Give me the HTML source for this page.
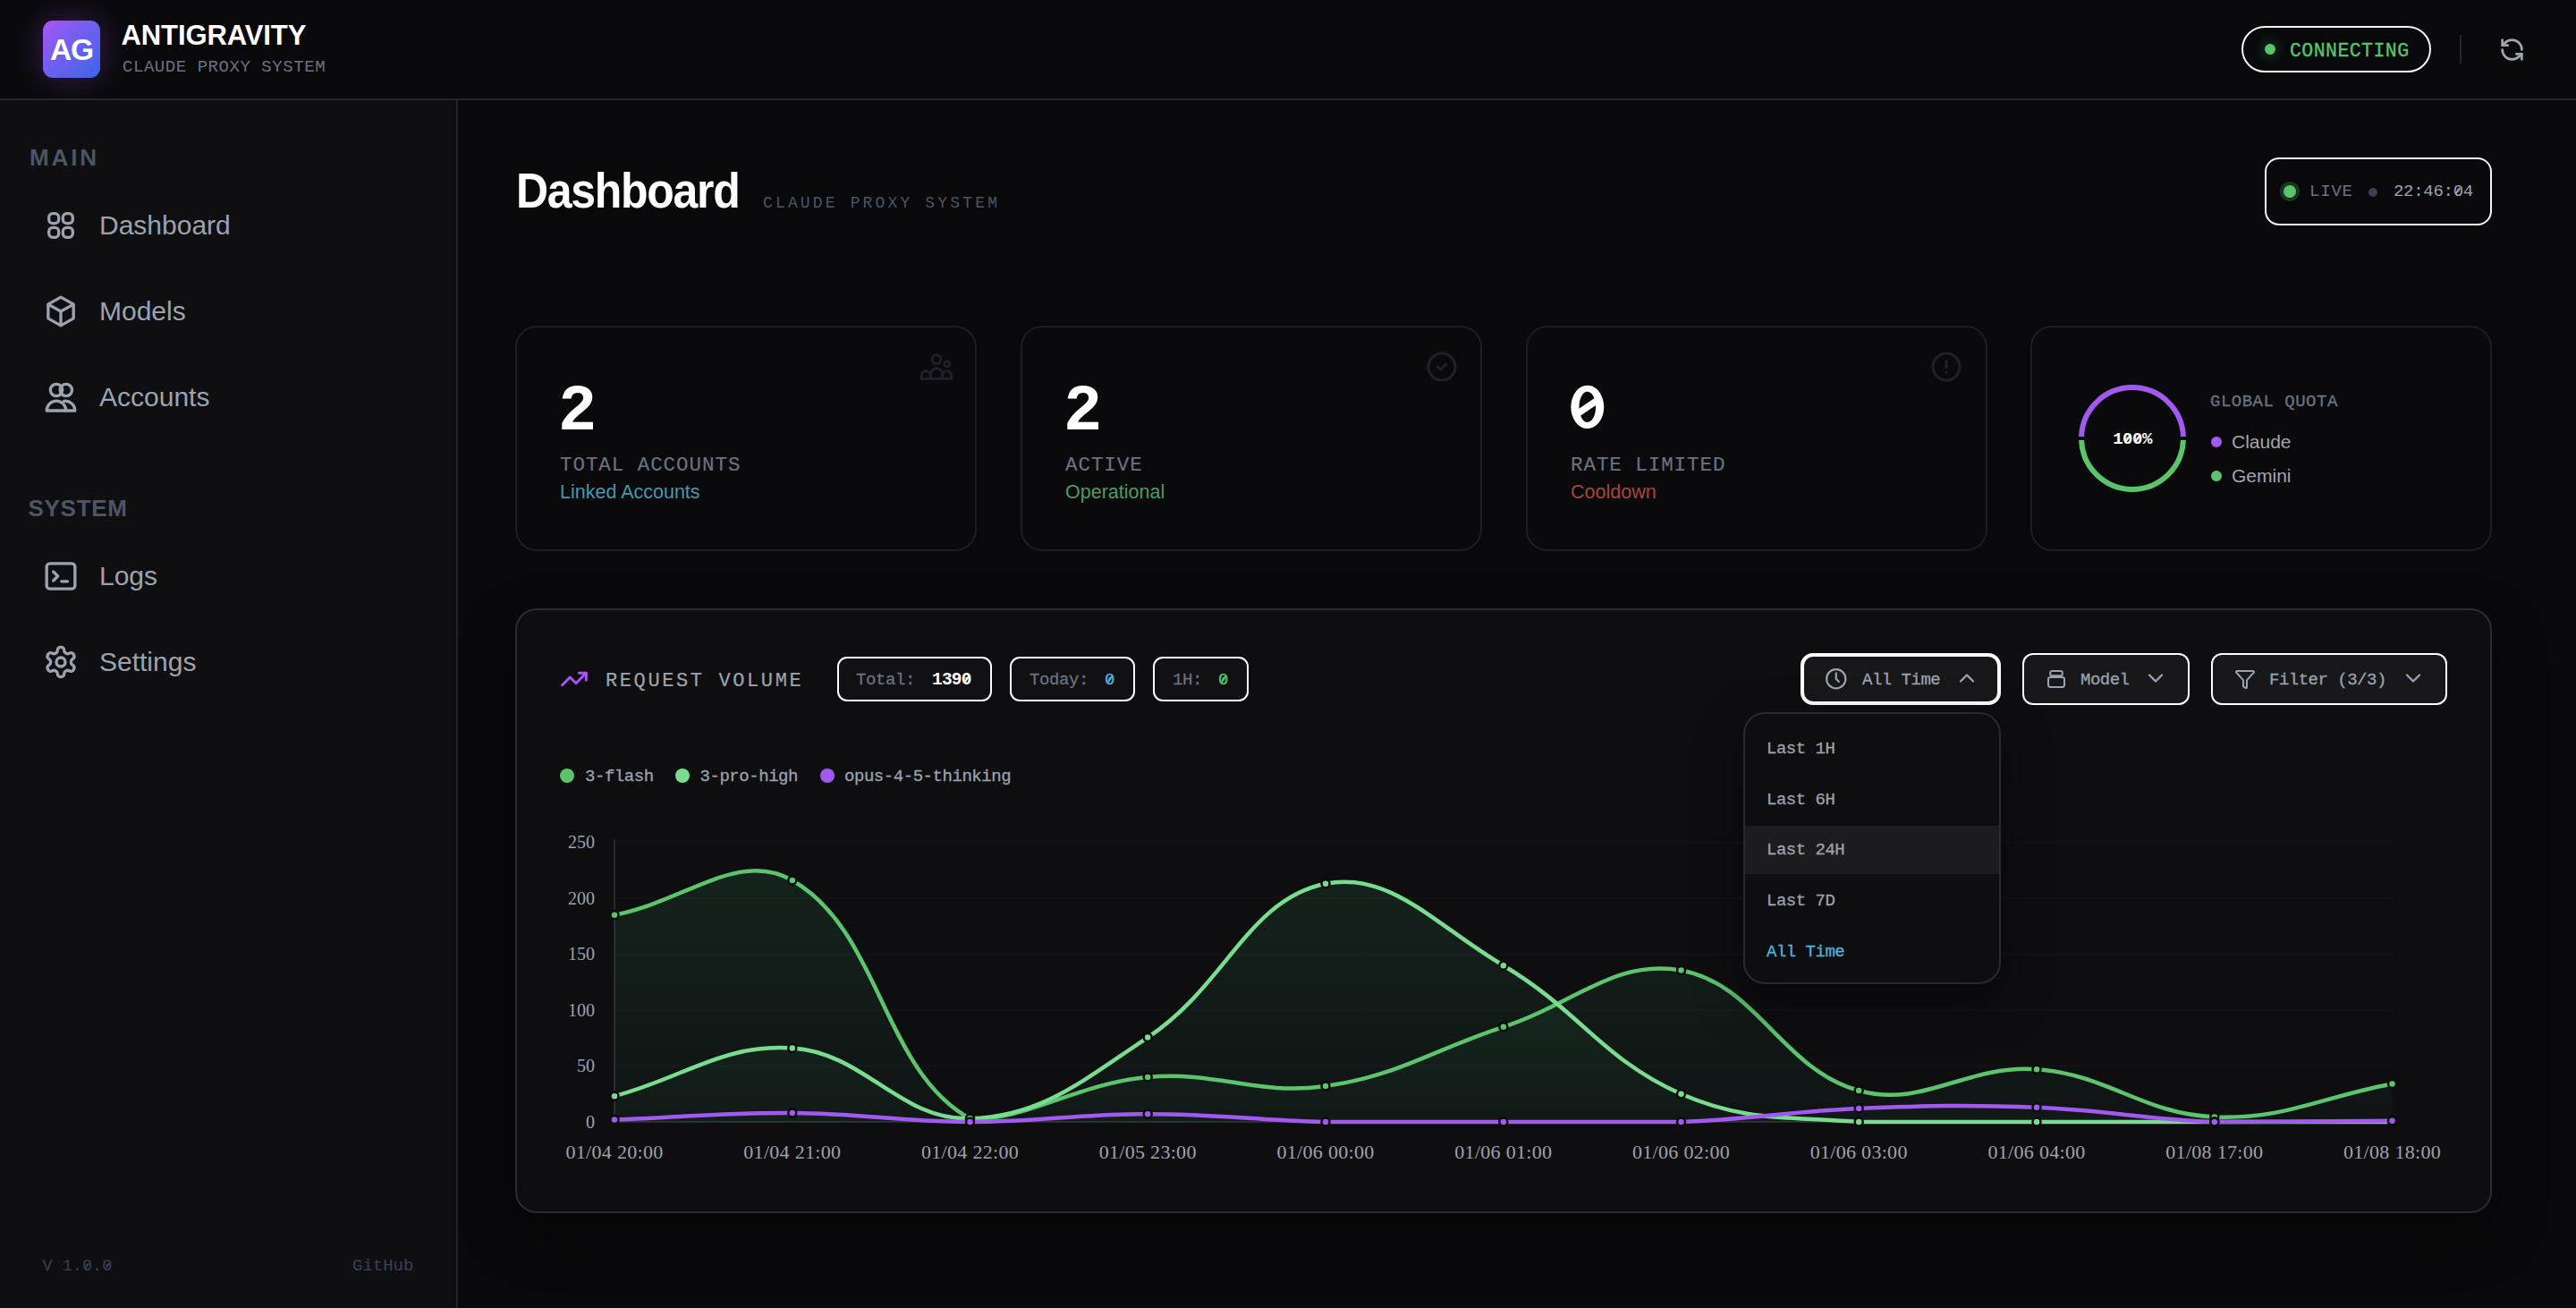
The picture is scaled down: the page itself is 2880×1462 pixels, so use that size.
<!DOCTYPE html>
<html><head><meta charset="utf-8">
<style>
*{box-sizing:border-box;margin:0;padding:0}
html,body{width:2880px;height:1462px;overflow:hidden;background:#09090b}
@media (max-width:2000px){html{zoom:0.5}}
body{position:relative;font-family:"Liberation Sans",sans-serif;color:#fff}
.mono{font-family:"Liberation Mono",monospace}
.abs{position:absolute}
.t{position:absolute;white-space:nowrap;line-height:1}
.z{position:relative;display:inline-block}.z::after{content:"";position:absolute;left:0.3em;top:0.43em;width:0.1em;height:0.4em;background:currentColor;transform:translate(-50%,-50%) rotate(34deg)}
svg.ic{position:absolute;fill:none;stroke-linecap:round;stroke-linejoin:round}
/* header */
#hdr{position:absolute;left:0;top:0;width:2880px;height:112px;background:#09090b;border-bottom:2px solid #26262a}
#logo{position:absolute;left:48px;top:23px;width:64px;height:64px;border-radius:11px;background:linear-gradient(135deg,#a855f7 0%,#6d5ff0 50%,#3b66e8 100%);box-shadow:0 0 36px rgba(168,85,247,0.32)}
#side{position:absolute;left:0;top:112px;width:512px;height:1350px;background:#0f0f12;border-right:2px solid #232327}
.card{position:absolute;top:364px;width:516px;height:252px;border:2px solid #1e1e22;border-radius:24px;background:#0a0a0d}
#panel{position:absolute;left:576px;top:680px;width:2210px;height:676px;border:2px solid #2c2c30;border-radius:24px;background:#0e0e11;box-shadow:0 24px 60px rgba(0,0,0,0.35)}
.box{position:absolute;border:2px solid #fff;border-radius:11px;background:#111114}
.btn{position:absolute;top:730px;height:58px;border:2px solid #fff;border-radius:12px;background:#18181b}
</style></head>
<body>
<!-- HEADER -->
<div id="hdr">
  <div id="logo"></div>
  <div class="t" style="left:56px;top:38.5px;font-size:33.5px;font-weight:700;letter-spacing:-1.2px">AG</div>
  <div class="t" style="left:135.5px;top:23.6px;font-size:31px;font-weight:700;letter-spacing:-0.1px">ANTIGRAVITY</div>
  <div class="t mono" style="left:137px;top:66px;font-size:19px;letter-spacing:0.55px;color:#6b7280">CLAUDE PROXY SYSTEM</div>
  <div class="abs" style="left:2506px;top:29px;width:212px;height:52px;border:2px solid #f4f4f5;border-radius:26px"></div>
  <div class="abs" style="left:2520px;top:37px;width:36px;height:36px;border-radius:50%;background:radial-gradient(circle,rgba(74,222,128,0.14) 0%,rgba(74,222,128,0) 70%)"></div>
  <div class="abs" style="left:2532px;top:49px;width:12px;height:12px;border-radius:50%;background:#5ac46b"></div>
  <div class="t mono" style="left:2560px;top:46.5px;font-size:21.5px;letter-spacing:0.45px;color:#5ac46b;-webkit-text-stroke:0.35px #5ac46b">CONNECTING</div>
  <div class="abs" style="left:2750px;top:39px;width:2px;height:32px;background:#26262a"></div>
  <svg class="ic" style="left:2793.5px;top:40.5px" width="29" height="29" viewBox="0 0 24 24" stroke="#a1a5ad" stroke-width="2.2"><path d="M21 12a9 9 0 0 0-9-9 9.75 9.75 0 0 0-6.74 2.74L3 8"/><path d="M3 3v5h5"/><path d="M3 12a9 9 0 0 0 9 9 9.75 9.75 0 0 0 6.74-2.74L21 16"/><path d="M16 16h5v5"/></svg>
</div>

<!-- SIDEBAR -->
<div id="side"></div>
<div class="t" style="left:33px;top:162.9px;font-size:26px;font-weight:700;letter-spacing:2.9px;color:#4b5563">MAIN</div>
<div class="t" style="left:31.5px;top:554.9px;font-size:26px;font-weight:700;letter-spacing:0.7px;color:#4b5563">SYSTEM</div>
<svg class="ic" style="left:48.0px;top:232.0px" width="40" height="40" viewBox="0 0 24 24" stroke="#9ca3af" stroke-width="2" ><rect x="4" y="4" width="6.6" height="6.6" rx="2.6"/><rect x="13.4" y="4" width="6.6" height="6.6" rx="2.6"/><rect x="4" y="13.4" width="6.6" height="6.6" rx="2.6"/><rect x="13.4" y="13.4" width="6.6" height="6.6" rx="2.6"/></svg>
<div class="t" style="top:236.5px;font-size:30px;font-family:'Liberation Sans',sans-serif;color:#9ca3af;left:111.0px;">Dashboard</div>
<svg class="ic" style="left:48.0px;top:328.0px" width="40" height="40" viewBox="0 0 24 24" stroke="#9ca3af" stroke-width="2" ><path d="M12 2.5 20.5 7.3v9.4L12 21.5 3.5 16.7V7.3Z"/><path d="M3.7 7.4 12 12l8.3-4.6"/><path d="M12 12v9.3"/></svg>
<div class="t" style="top:332.5px;font-size:30px;font-family:'Liberation Sans',sans-serif;color:#9ca3af;left:111.0px;">Models</div>
<svg class="ic" style="left:48.0px;top:424.0px" width="40" height="40" viewBox="0 0 24 24" stroke="#9ca3af" stroke-width="2" ><circle cx="9" cy="7.2" r="4"/><circle cx="15.5" cy="7.2" r="4"/><path d="M2.5 21a6.5 6.5 0 0 1 13 0Z"/><path d="M14.2 14.6A6.5 6.5 0 0 1 21.5 21h-6"/></svg>
<div class="t" style="top:428.5px;font-size:30px;font-family:'Liberation Sans',sans-serif;color:#9ca3af;left:111.0px;">Accounts</div>
<svg class="ic" style="left:48.0px;top:624.0px" width="40" height="40" viewBox="0 0 24 24" stroke="#9ca3af" stroke-width="2" ><rect x="2.5" y="3.5" width="19" height="17" rx="2.2"/><path d="m7 9 3 3-3 3"/><path d="M12.5 15.5h4"/></svg>
<div class="t" style="top:628.5px;font-size:30px;font-family:'Liberation Sans',sans-serif;color:#9ca3af;left:111.0px;">Logs</div>
<svg class="ic" style="left:48.0px;top:720.0px" width="40" height="40" viewBox="0 0 24 24" stroke="#9ca3af" stroke-width="2" ><path d="M12.22 2h-.44a2 2 0 0 0-2 2v.18a2 2 0 0 1-1 1.73l-.43.25a2 2 0 0 1-2 0l-.15-.08a2 2 0 0 0-2.73.73l-.22.38a2 2 0 0 0 .73 2.73l.15.1a2 2 0 0 1 1 1.72v.51a2 2 0 0 1-1 1.74l-.15.09a2 2 0 0 0-.73 2.73l.22.38a2 2 0 0 0 2.73.73l.15-.08a2 2 0 0 1 2 0l.43.25a2 2 0 0 1 1 1.73V20a2 2 0 0 0 2 2h.44a2 2 0 0 0 2-2v-.18a2 2 0 0 1 1-1.73l.43-.25a2 2 0 0 1 2 0l.15.08a2 2 0 0 0 2.73-.73l.22-.39a2 2 0 0 0-.73-2.73l-.15-.08a2 2 0 0 1-1-1.74v-.5a2 2 0 0 1 1-1.74l.15-.09a2 2 0 0 0 .73-2.73l-.22-.38a2 2 0 0 0-2.73-.73l-.15.08a2 2 0 0 1-2 0l-.43-.25a2 2 0 0 1-1-1.73V4a2 2 0 0 0-2-2z"/><circle cx="12" cy="12" r="3"/></svg>
<div class="t" style="top:724.5px;font-size:30px;font-family:'Liberation Sans',sans-serif;color:#9ca3af;left:111.0px;">Settings</div>
<div class="t mono" style="left:47.5px;top:1407px;font-size:18.5px;color:#374151">V 1.<span class="z">0</span>.<span class="z">0</span></div>
<div class="t mono" style="left:394px;top:1406px;font-size:19px;color:#374151">GitHub</div>

<!-- MAIN -->
<div class="t" style="left:577px;top:189.5px;font-size:50px;font-weight:700;letter-spacing:-1.3px;transform:scaleY(1.1);transform-origin:0 42.5px">Dashboard</div>
<div class="t mono" style="left:853px;top:218px;font-size:18px;letter-spacing:3.15px;color:#4b5563">CLAUDE PROXY SYSTEM</div>
<div class="abs" style="left:2532px;top:176px;width:254px;height:76px;border:2px solid #f4f4f5;border-radius:16px"></div>
<div class="abs" style="left:2549px;top:203px;width:22px;height:22px;border-radius:50%;background:#1b3322"></div>
<div class="abs" style="left:2553px;top:207px;width:14px;height:14px;border-radius:50%;background:#5ac46b"></div>
<div class="t mono" style="left:2582px;top:205px;font-size:19px;letter-spacing:0.8px;color:#6b7280">LIVE</div>
<div class="abs" style="left:2648px;top:210px;width:10px;height:10px;border-radius:50%;background:#374151"></div>
<div class="t mono" style="left:2676px;top:205px;font-size:19px;letter-spacing:-0.3px;color:#9ca3af">22:46:<span class="z">0</span>4</div>

<div class="card" style="left:576px"></div>
<div class="card" style="left:1141px"></div>
<div class="card" style="left:1706px"></div>
<div class="card" style="left:2270px"></div>
<div class="t" style="top:424.8px;font-size:72px;font-family:'Liberation Mono',monospace;color:#fff;font-weight:700;left:624.0px;">2</div>
<div class="t" style="top:509.2px;font-size:22.5px;font-family:'Liberation Mono',monospace;color:#6b7280;letter-spacing:0.95px;left:626.0px;-webkit-text-stroke:0.15px #6b7280;">TOTAL ACCOUNTS</div>
<div class="t" style="top:539.7px;font-size:21.5px;font-family:'Liberation Sans',sans-serif;color:#4696ad;left:626.0px;">Linked Accounts</div>
<svg class="ic" style="left:1029.0px;top:392.0px" width="36" height="36" viewBox="0 0 24 24" stroke="#1e212a" stroke-width="2" ><circle cx="12" cy="6.4" r="3.3"/><circle cx="19.85" cy="9.75" r="2"/><path d="M7.6 20.9V17.9a4.45 4.7 0 0 1 8.9 0v3"/><path d="M0.9 20.9V19a3.35 3.8 0 0 1 6.7 0"/><path d="M16.5 19a3.3 3.8 0 0 1 6.6 0v1.9"/><path d="M0.9 20.9H23.1"/></svg>
<div class="t" style="top:424.8px;font-size:72px;font-family:'Liberation Mono',monospace;color:#fff;font-weight:700;left:1189.0px;">2</div>
<div class="t" style="top:509.2px;font-size:22.5px;font-family:'Liberation Mono',monospace;color:#6b7280;letter-spacing:0.95px;left:1191.0px;-webkit-text-stroke:0.15px #6b7280;">ACTIVE</div>
<div class="t" style="top:539.7px;font-size:21.5px;font-family:'Liberation Sans',sans-serif;color:#4e9c5c;left:1191.0px;">Operational</div>
<svg class="ic" style="left:1594.0px;top:392.0px" width="36" height="36" viewBox="0 0 24 24" stroke="#1e212a" stroke-width="2" ><circle cx="12" cy="12" r="10"/><path d="m9 12 2 2 4-4"/></svg>
<svg class="abs" style="left:1750px;top:425px" width="50" height="60" viewBox="1750 425 50 60"><defs><clipPath id="zc"><ellipse cx="1774.75" cy="454.9" rx="10.5" ry="18.5"/></clipPath></defs><path fill="#fff" fill-rule="evenodd" d="M1756.3 454.9a18.45 24.2 0 1 0 36.9 0a18.45 24.2 0 1 0 -36.9 0ZM1765.45 454.9a9.3 17.1 0 1 0 18.6 0a9.3 17.1 0 1 0 -18.6 0Z"/><line x1="1755" y1="468.5" x2="1794.5" y2="441.3" stroke="#fff" stroke-width="7.4" clip-path="url(#zc)"/></svg>
<div class="t" style="top:509.2px;font-size:22.5px;font-family:'Liberation Mono',monospace;color:#6b7280;letter-spacing:0.95px;left:1756.0px;-webkit-text-stroke:0.15px #6b7280;">RATE LIMITED</div>
<div class="t" style="top:539.7px;font-size:21.5px;font-family:'Liberation Sans',sans-serif;color:#a6453b;left:1756.0px;">Cooldown</div>
<svg class="ic" style="left:2158.0px;top:392.0px" width="36" height="36" viewBox="0 0 24 24" stroke="#1e212a" stroke-width="2" ><circle cx="12" cy="12" r="10"/><line x1="12" x2="12" y1="8" y2="12"/><line x1="12" x2="12.01" y1="16" y2="16"/></svg>
<svg class="abs" style="left:2314px;top:420px" width="140" height="140" viewBox="0 0 140 140"><path d="M13.03,68.21 A57,57 0 0 1 126.97,68.21" fill="none" stroke="#a259f0" stroke-width="6"/><path d="M126.97,71.79 A57,57 0 0 1 13.03,71.79" fill="none" stroke="#5ac46b" stroke-width="6"/></svg>
<div class="t" style="top:481.6px;font-size:19px;font-family:'Liberation Mono',monospace;color:#fff;font-weight:700;letter-spacing:-0.5px;left:1884.0px;width:1000px;text-align:center;">1<span class="z">0</span><span class="z">0</span>%</div>
<div class="t" style="top:439.6px;font-size:19px;font-family:'Liberation Mono',monospace;color:#6b7280;letter-spacing:0.5px;-webkit-text-stroke:0.3px currentColor;left:2471.0px;">GLOBAL QUOTA</div>
<div class="abs" style="left:2472px;top:488px;width:12px;height:12px;border-radius:50%;background:#a259f0"></div>
<div class="abs" style="left:2472px;top:526px;width:12px;height:12px;border-radius:50%;background:#5ac46b"></div>
<div class="t" style="top:482.9px;font-size:21px;font-family:'Liberation Sans',sans-serif;color:#a1a5ad;left:2495.0px;">Claude</div>
<div class="t" style="top:521.0px;font-size:21px;font-family:'Liberation Sans',sans-serif;color:#a1a5ad;left:2495.0px;">Gemini</div>

<!-- <svg class="ic" style="left:626.0px;top:743.0px" width="32" height="32" viewBox="0 0 24 24" stroke="#a855f7" stroke-width="2.2" ><path d="M22 7 13.5 15.5 8.5 10.5 2 17"/><path d="M16 7h6v6"/></svg>
<div class="t" style="top:750.8px;font-size:22px;font-family:'Liberation Mono',monospace;color:#9ca3af;letter-spacing:2.6px;left:677.0px;-webkit-text-stroke:0.2px #9ca3af;">REQUEST VOLUME</div>
<div class="box" style="left:936px;top:734px;width:173px;height:50px"></div>
<div class="box" style="left:1129px;top:734px;width:140px;height:50px"></div>
<div class="box" style="left:1289px;top:734px;width:107px;height:50px"></div>
<div class="t" style="top:751.1px;font-size:19px;font-family:'Liberation Mono',monospace;color:#6b7280;letter-spacing:-0.4px;-webkit-text-stroke:0.3px currentColor;left:957.0px;">Total:</div>
<div class="t" style="top:751.0px;font-size:19.5px;font-family:'Liberation Mono',monospace;color:#fff;font-weight:700;letter-spacing:-0.8px;left:1042.0px;">139<span class="z">0</span></div>
<div class="t" style="top:751.1px;font-size:19px;font-family:'Liberation Mono',monospace;color:#6b7280;letter-spacing:-0.4px;-webkit-text-stroke:0.3px currentColor;left:1151.0px;">Today:</div>
<div class="t" style="top:751.1px;font-size:19px;font-family:'Liberation Mono',monospace;color:#4fb3d9;-webkit-text-stroke:0.3px currentColor;left:1235.0px;"><span class="z">0</span></div>
<div class="t" style="top:751.1px;font-size:19px;font-family:'Liberation Mono',monospace;color:#6b7280;letter-spacing:-0.4px;-webkit-text-stroke:0.3px currentColor;left:1311.0px;">1H:</div>
<div class="t" style="top:751.1px;font-size:19px;font-family:'Liberation Mono',monospace;color:#5ac46b;-webkit-text-stroke:0.3px currentColor;left:1362.0px;"><span class="z">0</span></div>
<div class="btn" style="left:2013px;width:224px;border-width:4px;border-radius:14px"></div>
<div class="btn" style="left:2261px;width:187px"></div>
<div class="btn" style="left:2472px;width:264px"></div>
<svg class="ic" style="left:2039.8px;top:746.2px" width="25.5" height="25.5" viewBox="0 0 24 24" stroke="#9ca3af" stroke-width="2.1" ><circle cx="12" cy="12" r="10"/><path d="M12 6v6l3 3"/></svg>
<div class="t" style="top:750.6px;font-size:19px;font-family:'Liberation Mono',monospace;color:#9ca3af;letter-spacing:-0.5px;-webkit-text-stroke:0.3px currentColor;left:2082.0px;">All Time</div>
<svg class="ic" style="left:2185.0px;top:744.0px" width="28" height="28" viewBox="0 0 24 24" stroke="#9ca3af" stroke-width="2" ><path d="m6 15 6-6 6 6"/></svg>
<svg class="ic" style="left:2287.0px;top:747.0px" width="24" height="24" viewBox="0 0 24 24" stroke="#9ca3af" stroke-width="2" ><rect x="5.2" y="3" width="13.6" height="5.2" rx="2"/><rect x="3" y="10" width="18" height="11" rx="2.4"/></svg>
<div class="t" style="top:750.6px;font-size:19px;font-family:'Liberation Mono',monospace;color:#9ca3af;letter-spacing:-0.5px;-webkit-text-stroke:0.3px currentColor;left:2326.0px;">Model</div>
<svg class="ic" style="left:2396.0px;top:744.0px" width="28" height="28" viewBox="0 0 24 24" stroke="#9ca3af" stroke-width="2" ><path d="m6 9 6 6 6-6"/></svg>
<svg class="ic" style="left:2498.0px;top:747.0px" width="24" height="24" viewBox="0 0 24 24" stroke="#9ca3af" stroke-width="2" ><path d="M10 20a1 1 0 0 0 .553.895l2 1A1 1 0 0 0 14 21v-7a2 2 0 0 1 .517-1.341L21.74 4.67A1 1 0 0 0 21 3H3a1 1 0 0 0-.742 1.67l7.225 7.989A2 2 0 0 1 10 14z"/></svg>
<div class="t" style="top:750.6px;font-size:19px;font-family:'Liberation Mono',monospace;color:#9ca3af;letter-spacing:-0.5px;-webkit-text-stroke:0.3px currentColor;left:2537.0px;">Filter (3/3)</div>
<svg class="ic" style="left:2684.0px;top:744.0px" width="28" height="28" viewBox="0 0 24 24" stroke="#9ca3af" stroke-width="2" ><path d="m6 9 6 6 6-6"/></svg>
<div class="abs" style="left:626px;top:859px;width:16px;height:16px;border-radius:50%;background:#5ac46b"></div>
<div class="t" style="top:858.6px;font-size:19px;font-family:'Liberation Mono',monospace;color:#9ca3af;letter-spacing:-0.45px;-webkit-text-stroke:0.3px currentColor;left:654.0px;">3-flash</div>
<div class="abs" style="left:755px;top:859px;width:16px;height:16px;border-radius:50%;background:#7adc8e"></div>
<div class="t" style="top:858.6px;font-size:19px;font-family:'Liberation Mono',monospace;color:#9ca3af;letter-spacing:-0.45px;-webkit-text-stroke:0.3px currentColor;left:782.5px;">3-pro-high</div>
<div class="abs" style="left:917px;top:859px;width:16px;height:16px;border-radius:50%;background:#a259f0"></div>
<div class="t" style="top:858.6px;font-size:19px;font-family:'Liberation Mono',monospace;color:#9ca3af;letter-spacing:-0.45px;-webkit-text-stroke:0.3px currentColor;left:944.0px;">opus-4-5-thinking</div>
<svg class="abs" style="left:0;top:0" width="2880" height="1462" viewBox="0 0 2880 1462">
<defs><linearGradient id="gf" x1="0" y1="941" x2="0" y2="1254" gradientUnits="userSpaceOnUse"><stop offset="0" stop-color="#4ade80" stop-opacity="0.11"/><stop offset="1" stop-color="#4ade80" stop-opacity="0.025"/></linearGradient></defs>
<line x1="687.0" y1="1254.0" x2="2674.5" y2="1254.0" stroke="#2a2a2e" stroke-width="2"/>
<line x1="687.0" y1="1191.5" x2="2674.5" y2="1191.5" stroke="#121215" stroke-width="2"/>
<line x1="687.0" y1="1129.0" x2="2674.5" y2="1129.0" stroke="#121215" stroke-width="2"/>
<line x1="687.0" y1="1066.5" x2="2674.5" y2="1066.5" stroke="#121215" stroke-width="2"/>
<line x1="687.0" y1="1004.0" x2="2674.5" y2="1004.0" stroke="#121215" stroke-width="2"/>
<line x1="687.0" y1="941.5" x2="2674.5" y2="941.5" stroke="#121215" stroke-width="2"/>
<line x1="687.0" y1="938.5" x2="687.0" y2="1254.0" stroke="#2a2a2e" stroke-width="2"/>
<path d="M687.0,1022.8 C766.5,1007.2 825.5,949.5 885.8,984.0 C984.5,1040.5 986.0,1195.7 1084.5,1250.2 C1145.0,1254.0 1202.8,1211.3 1283.2,1204.0 C1361.8,1196.8 1404.5,1225.0 1482.0,1214.0 C1563.5,1202.5 1601.1,1173.7 1680.8,1147.8 C1760.1,1121.9 1805.6,1071.4 1879.5,1084.6 C1964.6,1099.9 1991.6,1194.9 2078.2,1219.0 C2150.6,1239.1 2198.6,1189.5 2277.0,1195.2 C2357.6,1201.2 2395.6,1245.1 2475.8,1248.4 C2554.6,1251.6 2595.0,1226.2 2674.5,1211.5 L2674.5,1254.0 L687.0,1254.0 Z" fill="url(#gf)"/>
<path d="M687.0,1225.2 C766.5,1203.8 807.7,1166.6 885.8,1171.5 C966.7,1176.6 1005.9,1252.6 1084.5,1250.2 C1164.9,1247.8 1211.1,1207.3 1283.2,1159.6 C1370.1,1102.3 1395.2,1005.3 1482.0,987.8 C1554.2,973.1 1605.8,1034.9 1680.8,1079.2 C1764.8,1128.9 1792.2,1184.4 1879.5,1222.8 C1951.2,1254.0 1998.3,1247.7 2078.2,1254.0 C2157.3,1254.0 2197.5,1254.0 2277.0,1254.0 C2356.5,1254.0 2396.2,1254.0 2475.8,1254.0 C2555.2,1254.0 2595.0,1254.0 2674.5,1254.0 L2674.5,1254.0 L687.0,1254.0 Z" fill="url(#gf)"/>
<path d="M687.0,1251.5 C766.5,1248.5 806.3,1243.5 885.8,1244.0 C965.3,1244.5 1005.0,1253.7 1084.5,1254.0 C1164.0,1254.0 1203.8,1245.2 1283.2,1245.2 C1362.8,1245.2 1402.5,1252.2 1482.0,1254.0 C1561.5,1254.0 1601.2,1254.0 1680.8,1254.0 C1760.2,1254.0 1800.1,1254.0 1879.5,1254.0 C1959.1,1251.0 1998.6,1242.3 2078.2,1239.0 C2157.6,1235.8 2197.6,1234.8 2277.0,1237.8 C2356.6,1240.8 2396.1,1251.0 2475.8,1254.0 C2555.1,1254.0 2595.0,1253.2 2674.5,1252.8 L2674.5,1254.0 L687.0,1254.0 Z" fill="url(#gf)"/>
<path d="M687.0,1022.8 C766.5,1007.2 825.5,949.5 885.8,984.0 C984.5,1040.5 986.0,1195.7 1084.5,1250.2 C1145.0,1254.0 1202.8,1211.3 1283.2,1204.0 C1361.8,1196.8 1404.5,1225.0 1482.0,1214.0 C1563.5,1202.5 1601.1,1173.7 1680.8,1147.8 C1760.1,1121.9 1805.6,1071.4 1879.5,1084.6 C1964.6,1099.9 1991.6,1194.9 2078.2,1219.0 C2150.6,1239.1 2198.6,1189.5 2277.0,1195.2 C2357.6,1201.2 2395.6,1245.1 2475.8,1248.4 C2554.6,1251.6 2595.0,1226.2 2674.5,1211.5" fill="none" stroke="#5cc46c" stroke-width="4.5" stroke-linejoin="round" stroke-linecap="round"/>
<path d="M687.0,1225.2 C766.5,1203.8 807.7,1166.6 885.8,1171.5 C966.7,1176.6 1005.9,1252.6 1084.5,1250.2 C1164.9,1247.8 1211.1,1207.3 1283.2,1159.6 C1370.1,1102.3 1395.2,1005.3 1482.0,987.8 C1554.2,973.1 1605.8,1034.9 1680.8,1079.2 C1764.8,1128.9 1792.2,1184.4 1879.5,1222.8 C1951.2,1254.0 1998.3,1247.7 2078.2,1254.0 C2157.3,1254.0 2197.5,1254.0 2277.0,1254.0 C2356.5,1254.0 2396.2,1254.0 2475.8,1254.0 C2555.2,1254.0 2595.0,1254.0 2674.5,1254.0" fill="none" stroke="#7adc8e" stroke-width="4.5" stroke-linejoin="round" stroke-linecap="round"/>
<path d="M687.0,1251.5 C766.5,1248.5 806.3,1243.5 885.8,1244.0 C965.3,1244.5 1005.0,1253.7 1084.5,1254.0 C1164.0,1254.0 1203.8,1245.2 1283.2,1245.2 C1362.8,1245.2 1402.5,1252.2 1482.0,1254.0 C1561.5,1254.0 1601.2,1254.0 1680.8,1254.0 C1760.2,1254.0 1800.1,1254.0 1879.5,1254.0 C1959.1,1251.0 1998.6,1242.3 2078.2,1239.0 C2157.6,1235.8 2197.6,1234.8 2277.0,1237.8 C2356.6,1240.8 2396.1,1251.0 2475.8,1254.0 C2555.1,1254.0 2595.0,1253.2 2674.5,1252.8" fill="none" stroke="#a259f0" stroke-width="4.5" stroke-linejoin="round" stroke-linecap="round"/>
<circle cx="687.0" cy="1022.8" r="4.5" fill="#5cc46c" stroke="#0b0b0d" stroke-width="2.5"/>
<circle cx="885.8" cy="984.0" r="4.5" fill="#5cc46c" stroke="#0b0b0d" stroke-width="2.5"/>
<circle cx="1084.5" cy="1250.2" r="4.5" fill="#5cc46c" stroke="#0b0b0d" stroke-width="2.5"/>
<circle cx="1283.2" cy="1204.0" r="4.5" fill="#5cc46c" stroke="#0b0b0d" stroke-width="2.5"/>
<circle cx="1482.0" cy="1214.0" r="4.5" fill="#5cc46c" stroke="#0b0b0d" stroke-width="2.5"/>
<circle cx="1680.8" cy="1147.8" r="4.5" fill="#5cc46c" stroke="#0b0b0d" stroke-width="2.5"/>
<circle cx="1879.5" cy="1084.6" r="4.5" fill="#5cc46c" stroke="#0b0b0d" stroke-width="2.5"/>
<circle cx="2078.2" cy="1219.0" r="4.5" fill="#5cc46c" stroke="#0b0b0d" stroke-width="2.5"/>
<circle cx="2277.0" cy="1195.2" r="4.5" fill="#5cc46c" stroke="#0b0b0d" stroke-width="2.5"/>
<circle cx="2475.8" cy="1248.4" r="4.5" fill="#5cc46c" stroke="#0b0b0d" stroke-width="2.5"/>
<circle cx="2674.5" cy="1211.5" r="4.5" fill="#5cc46c" stroke="#0b0b0d" stroke-width="2.5"/>
<circle cx="687.0" cy="1225.2" r="4.5" fill="#7adc8e" stroke="#0b0b0d" stroke-width="2.5"/>
<circle cx="885.8" cy="1171.5" r="4.5" fill="#7adc8e" stroke="#0b0b0d" stroke-width="2.5"/>
<circle cx="1084.5" cy="1250.2" r="4.5" fill="#7adc8e" stroke="#0b0b0d" stroke-width="2.5"/>
<circle cx="1283.2" cy="1159.6" r="4.5" fill="#7adc8e" stroke="#0b0b0d" stroke-width="2.5"/>
<circle cx="1482.0" cy="987.8" r="4.5" fill="#7adc8e" stroke="#0b0b0d" stroke-width="2.5"/>
<circle cx="1680.8" cy="1079.2" r="4.5" fill="#7adc8e" stroke="#0b0b0d" stroke-width="2.5"/>
<circle cx="1879.5" cy="1222.8" r="4.5" fill="#7adc8e" stroke="#0b0b0d" stroke-width="2.5"/>
<circle cx="2078.2" cy="1254.0" r="4.5" fill="#7adc8e" stroke="#0b0b0d" stroke-width="2.5"/>
<circle cx="2277.0" cy="1254.0" r="4.5" fill="#7adc8e" stroke="#0b0b0d" stroke-width="2.5"/>
<circle cx="2475.8" cy="1254.0" r="4.5" fill="#7adc8e" stroke="#0b0b0d" stroke-width="2.5"/>
<circle cx="2674.5" cy="1254.0" r="4.5" fill="#7adc8e" stroke="#0b0b0d" stroke-width="2.5"/>
<circle cx="687.0" cy="1251.5" r="4.5" fill="#a259f0" stroke="#0b0b0d" stroke-width="2.5"/>
<circle cx="885.8" cy="1244.0" r="4.5" fill="#a259f0" stroke="#0b0b0d" stroke-width="2.5"/>
<circle cx="1084.5" cy="1254.0" r="4.5" fill="#a259f0" stroke="#0b0b0d" stroke-width="2.5"/>
<circle cx="1283.2" cy="1245.2" r="4.5" fill="#a259f0" stroke="#0b0b0d" stroke-width="2.5"/>
<circle cx="1482.0" cy="1254.0" r="4.5" fill="#a259f0" stroke="#0b0b0d" stroke-width="2.5"/>
<circle cx="1680.8" cy="1254.0" r="4.5" fill="#a259f0" stroke="#0b0b0d" stroke-width="2.5"/>
<circle cx="1879.5" cy="1254.0" r="4.5" fill="#a259f0" stroke="#0b0b0d" stroke-width="2.5"/>
<circle cx="2078.2" cy="1239.0" r="4.5" fill="#a259f0" stroke="#0b0b0d" stroke-width="2.5"/>
<circle cx="2277.0" cy="1237.8" r="4.5" fill="#a259f0" stroke="#0b0b0d" stroke-width="2.5"/>
<circle cx="2475.8" cy="1254.0" r="4.5" fill="#a259f0" stroke="#0b0b0d" stroke-width="2.5"/>
<circle cx="2674.5" cy="1252.8" r="4.5" fill="#a259f0" stroke="#0b0b0d" stroke-width="2.5"/>
</svg>
<div class="t" style="top:1243.5px;font-size:20px;font-family:'Liberation Serif',serif;color:#a1a1aa;right:2215.0px;">0</div>
<div class="t" style="top:1181.0px;font-size:20px;font-family:'Liberation Serif',serif;color:#a1a1aa;right:2215.0px;">50</div>
<div class="t" style="top:1118.5px;font-size:20px;font-family:'Liberation Serif',serif;color:#a1a1aa;right:2215.0px;">100</div>
<div class="t" style="top:1056.0px;font-size:20px;font-family:'Liberation Serif',serif;color:#a1a1aa;right:2215.0px;">150</div>
<div class="t" style="top:993.5px;font-size:20px;font-family:'Liberation Serif',serif;color:#a1a1aa;right:2215.0px;">200</div>
<div class="t" style="top:931.0px;font-size:20px;font-family:'Liberation Serif',serif;color:#a1a1aa;right:2215.0px;">250</div>
<div class="t" style="top:1277.3px;font-size:22px;font-family:'Liberation Serif',serif;color:#a1a1aa;letter-spacing:0.3px;left:187.0px;width:1000px;text-align:center;">01/04 20:00</div>
<div class="t" style="top:1277.3px;font-size:22px;font-family:'Liberation Serif',serif;color:#a1a1aa;letter-spacing:0.3px;left:385.8px;width:1000px;text-align:center;">01/04 21:00</div>
<div class="t" style="top:1277.3px;font-size:22px;font-family:'Liberation Serif',serif;color:#a1a1aa;letter-spacing:0.3px;left:584.5px;width:1000px;text-align:center;">01/04 22:00</div>
<div class="t" style="top:1277.3px;font-size:22px;font-family:'Liberation Serif',serif;color:#a1a1aa;letter-spacing:0.3px;left:783.2px;width:1000px;text-align:center;">01/05 23:00</div>
<div class="t" style="top:1277.3px;font-size:22px;font-family:'Liberation Serif',serif;color:#a1a1aa;letter-spacing:0.3px;left:982.0px;width:1000px;text-align:center;">01/06 00:00</div>
<div class="t" style="top:1277.3px;font-size:22px;font-family:'Liberation Serif',serif;color:#a1a1aa;letter-spacing:0.3px;left:1180.8px;width:1000px;text-align:center;">01/06 01:00</div>
<div class="t" style="top:1277.3px;font-size:22px;font-family:'Liberation Serif',serif;color:#a1a1aa;letter-spacing:0.3px;left:1379.5px;width:1000px;text-align:center;">01/06 02:00</div>
<div class="t" style="top:1277.3px;font-size:22px;font-family:'Liberation Serif',serif;color:#a1a1aa;letter-spacing:0.3px;left:1578.2px;width:1000px;text-align:center;">01/06 03:00</div>
<div class="t" style="top:1277.3px;font-size:22px;font-family:'Liberation Serif',serif;color:#a1a1aa;letter-spacing:0.3px;left:1777.0px;width:1000px;text-align:center;">01/06 04:00</div>
<div class="t" style="top:1277.3px;font-size:22px;font-family:'Liberation Serif',serif;color:#a1a1aa;letter-spacing:0.3px;left:1975.8px;width:1000px;text-align:center;">01/08 17:00</div>
<div class="t" style="top:1277.3px;font-size:22px;font-family:'Liberation Serif',serif;color:#a1a1aa;letter-spacing:0.3px;left:2174.5px;width:1000px;text-align:center;">01/08 18:00</div>
<div class="abs" style="left:1949px;top:796px;width:288px;height:304px;border:2px solid #2a2a2e;border-radius:24px;background:#0e0e11;box-shadow:0 20px 50px rgba(0,0,0,0.5);overflow:hidden"><div class="abs" style="left:0;top:125px;width:284px;height:54px;background:#1c1c1f"></div></div>
<div class="t" style="top:827.6px;font-size:19px;font-family:'Liberation Mono',monospace;color:#a1a1aa;letter-spacing:-0.5px;-webkit-text-stroke:0.3px currentColor;left:1975.0px;">Last 1H</div>
<div class="t" style="top:884.5px;font-size:19px;font-family:'Liberation Mono',monospace;color:#a1a1aa;letter-spacing:-0.5px;-webkit-text-stroke:0.3px currentColor;left:1975.0px;">Last 6H</div>
<div class="t" style="top:941.4px;font-size:19px;font-family:'Liberation Mono',monospace;color:#a1a1aa;letter-spacing:-0.5px;-webkit-text-stroke:0.3px currentColor;left:1975.0px;">Last 24H</div>
<div class="t" style="top:998.3px;font-size:19px;font-family:'Liberation Mono',monospace;color:#a1a1aa;letter-spacing:-0.5px;-webkit-text-stroke:0.3px currentColor;left:1975.0px;">Last 7D</div>
<div class="t" style="top:1055.2px;font-size:19px;font-family:'Liberation Mono',monospace;color:#4fb3d9;letter-spacing:-0.5px;-webkit-text-stroke:0.3px currentColor;left:1975.0px;">All Time</div> -->
<div id="panel"></div>
<svg class="ic" style="left:626.0px;top:743.0px" width="32" height="32" viewBox="0 0 24 24" stroke="#a855f7" stroke-width="2.2" ><path d="M22 7 13.5 15.5 8.5 10.5 2 17"/><path d="M16 7h6v6"/></svg>
<div class="t" style="top:750.8px;font-size:22px;font-family:'Liberation Mono',monospace;color:#9ca3af;letter-spacing:2.6px;left:677.0px;-webkit-text-stroke:0.2px #9ca3af;">REQUEST VOLUME</div>
<div class="box" style="left:936px;top:734px;width:173px;height:50px"></div>
<div class="box" style="left:1129px;top:734px;width:140px;height:50px"></div>
<div class="box" style="left:1289px;top:734px;width:107px;height:50px"></div>
<div class="t" style="top:751.1px;font-size:19px;font-family:'Liberation Mono',monospace;color:#6b7280;letter-spacing:-0.4px;-webkit-text-stroke:0.3px currentColor;left:957.0px;">Total:</div>
<div class="t" style="top:751.0px;font-size:19.5px;font-family:'Liberation Mono',monospace;color:#fff;font-weight:700;letter-spacing:-0.8px;left:1042.0px;">139<span class="z">0</span></div>
<div class="t" style="top:751.1px;font-size:19px;font-family:'Liberation Mono',monospace;color:#6b7280;letter-spacing:-0.4px;-webkit-text-stroke:0.3px currentColor;left:1151.0px;">Today:</div>
<div class="t" style="top:751.1px;font-size:19px;font-family:'Liberation Mono',monospace;color:#4fb3d9;-webkit-text-stroke:0.3px currentColor;left:1235.0px;"><span class="z">0</span></div>
<div class="t" style="top:751.1px;font-size:19px;font-family:'Liberation Mono',monospace;color:#6b7280;letter-spacing:-0.4px;-webkit-text-stroke:0.3px currentColor;left:1311.0px;">1H:</div>
<div class="t" style="top:751.1px;font-size:19px;font-family:'Liberation Mono',monospace;color:#5ac46b;-webkit-text-stroke:0.3px currentColor;left:1362.0px;"><span class="z">0</span></div>
<div class="btn" style="left:2013px;width:224px;border-width:4px;border-radius:14px"></div>
<div class="btn" style="left:2261px;width:187px"></div>
<div class="btn" style="left:2472px;width:264px"></div>
<svg class="ic" style="left:2039.8px;top:746.2px" width="25.5" height="25.5" viewBox="0 0 24 24" stroke="#9ca3af" stroke-width="2.1" ><circle cx="12" cy="12" r="10"/><path d="M12 6v6l3 3"/></svg>
<div class="t" style="top:750.6px;font-size:19px;font-family:'Liberation Mono',monospace;color:#9ca3af;letter-spacing:-0.5px;-webkit-text-stroke:0.3px currentColor;left:2082.0px;">All Time</div>
<svg class="ic" style="left:2185.0px;top:744.0px" width="28" height="28" viewBox="0 0 24 24" stroke="#9ca3af" stroke-width="2" ><path d="m6 15 6-6 6 6"/></svg>
<svg class="ic" style="left:2287.0px;top:747.0px" width="24" height="24" viewBox="0 0 24 24" stroke="#9ca3af" stroke-width="2" ><rect x="5.2" y="3" width="13.6" height="5.2" rx="2"/><rect x="3" y="10" width="18" height="11" rx="2.4"/></svg>
<div class="t" style="top:750.6px;font-size:19px;font-family:'Liberation Mono',monospace;color:#9ca3af;letter-spacing:-0.5px;-webkit-text-stroke:0.3px currentColor;left:2326.0px;">Model</div>
<svg class="ic" style="left:2396.0px;top:744.0px" width="28" height="28" viewBox="0 0 24 24" stroke="#9ca3af" stroke-width="2" ><path d="m6 9 6 6 6-6"/></svg>
<svg class="ic" style="left:2498.0px;top:747.0px" width="24" height="24" viewBox="0 0 24 24" stroke="#9ca3af" stroke-width="2" ><path d="M10 20a1 1 0 0 0 .553.895l2 1A1 1 0 0 0 14 21v-7a2 2 0 0 1 .517-1.341L21.74 4.67A1 1 0 0 0 21 3H3a1 1 0 0 0-.742 1.67l7.225 7.989A2 2 0 0 1 10 14z"/></svg>
<div class="t" style="top:750.6px;font-size:19px;font-family:'Liberation Mono',monospace;color:#9ca3af;letter-spacing:-0.5px;-webkit-text-stroke:0.3px currentColor;left:2537.0px;">Filter (3/3)</div>
<svg class="ic" style="left:2684.0px;top:744.0px" width="28" height="28" viewBox="0 0 24 24" stroke="#9ca3af" stroke-width="2" ><path d="m6 9 6 6 6-6"/></svg>
<div class="abs" style="left:626px;top:859px;width:16px;height:16px;border-radius:50%;background:#5ac46b"></div>
<div class="t" style="top:858.6px;font-size:19px;font-family:'Liberation Mono',monospace;color:#9ca3af;letter-spacing:-0.45px;-webkit-text-stroke:0.3px currentColor;left:654.0px;">3-flash</div>
<div class="abs" style="left:755px;top:859px;width:16px;height:16px;border-radius:50%;background:#7adc8e"></div>
<div class="t" style="top:858.6px;font-size:19px;font-family:'Liberation Mono',monospace;color:#9ca3af;letter-spacing:-0.45px;-webkit-text-stroke:0.3px currentColor;left:782.5px;">3-pro-high</div>
<div class="abs" style="left:917px;top:859px;width:16px;height:16px;border-radius:50%;background:#a259f0"></div>
<div class="t" style="top:858.6px;font-size:19px;font-family:'Liberation Mono',monospace;color:#9ca3af;letter-spacing:-0.45px;-webkit-text-stroke:0.3px currentColor;left:944.0px;">opus-4-5-thinking</div>
<svg class="abs" style="left:0;top:0" width="2880" height="1462" viewBox="0 0 2880 1462">
<defs><linearGradient id="gf" x1="0" y1="941" x2="0" y2="1254" gradientUnits="userSpaceOnUse"><stop offset="0" stop-color="#4ade80" stop-opacity="0.11"/><stop offset="1" stop-color="#4ade80" stop-opacity="0.025"/></linearGradient></defs>
<line x1="687.0" y1="1254.0" x2="2674.5" y2="1254.0" stroke="#2a2a2e" stroke-width="2"/>
<line x1="687.0" y1="1191.5" x2="2674.5" y2="1191.5" stroke="#121215" stroke-width="2"/>
<line x1="687.0" y1="1129.0" x2="2674.5" y2="1129.0" stroke="#121215" stroke-width="2"/>
<line x1="687.0" y1="1066.5" x2="2674.5" y2="1066.5" stroke="#121215" stroke-width="2"/>
<line x1="687.0" y1="1004.0" x2="2674.5" y2="1004.0" stroke="#121215" stroke-width="2"/>
<line x1="687.0" y1="941.5" x2="2674.5" y2="941.5" stroke="#121215" stroke-width="2"/>
<line x1="687.0" y1="938.5" x2="687.0" y2="1254.0" stroke="#2a2a2e" stroke-width="2"/>
<path d="M687.0,1022.8 C766.5,1007.2 825.5,949.5 885.8,984.0 C984.5,1040.5 986.0,1195.7 1084.5,1250.2 C1145.0,1254.0 1202.8,1211.3 1283.2,1204.0 C1361.8,1196.8 1404.5,1225.0 1482.0,1214.0 C1563.5,1202.5 1601.1,1173.7 1680.8,1147.8 C1760.1,1121.9 1805.6,1071.4 1879.5,1084.6 C1964.6,1099.9 1991.6,1194.9 2078.2,1219.0 C2150.6,1239.1 2198.6,1189.5 2277.0,1195.2 C2357.6,1201.2 2395.6,1245.1 2475.8,1248.4 C2554.6,1251.6 2595.0,1226.2 2674.5,1211.5 L2674.5,1254.0 L687.0,1254.0 Z" fill="url(#gf)"/>
<path d="M687.0,1225.2 C766.5,1203.8 807.7,1166.6 885.8,1171.5 C966.7,1176.6 1005.9,1252.6 1084.5,1250.2 C1164.9,1247.8 1211.1,1207.3 1283.2,1159.6 C1370.1,1102.3 1395.2,1005.3 1482.0,987.8 C1554.2,973.1 1605.8,1034.9 1680.8,1079.2 C1764.8,1128.9 1792.2,1184.4 1879.5,1222.8 C1951.2,1254.0 1998.3,1247.7 2078.2,1254.0 C2157.3,1254.0 2197.5,1254.0 2277.0,1254.0 C2356.5,1254.0 2396.2,1254.0 2475.8,1254.0 C2555.2,1254.0 2595.0,1254.0 2674.5,1254.0 L2674.5,1254.0 L687.0,1254.0 Z" fill="url(#gf)"/>
<path d="M687.0,1251.5 C766.5,1248.5 806.3,1243.5 885.8,1244.0 C965.3,1244.5 1005.0,1253.7 1084.5,1254.0 C1164.0,1254.0 1203.8,1245.2 1283.2,1245.2 C1362.8,1245.2 1402.5,1252.2 1482.0,1254.0 C1561.5,1254.0 1601.2,1254.0 1680.8,1254.0 C1760.2,1254.0 1800.1,1254.0 1879.5,1254.0 C1959.1,1251.0 1998.6,1242.3 2078.2,1239.0 C2157.6,1235.8 2197.6,1234.8 2277.0,1237.8 C2356.6,1240.8 2396.1,1251.0 2475.8,1254.0 C2555.1,1254.0 2595.0,1253.2 2674.5,1252.8 L2674.5,1254.0 L687.0,1254.0 Z" fill="url(#gf)"/>
<path d="M687.0,1022.8 C766.5,1007.2 825.5,949.5 885.8,984.0 C984.5,1040.5 986.0,1195.7 1084.5,1250.2 C1145.0,1254.0 1202.8,1211.3 1283.2,1204.0 C1361.8,1196.8 1404.5,1225.0 1482.0,1214.0 C1563.5,1202.5 1601.1,1173.7 1680.8,1147.8 C1760.1,1121.9 1805.6,1071.4 1879.5,1084.6 C1964.6,1099.9 1991.6,1194.9 2078.2,1219.0 C2150.6,1239.1 2198.6,1189.5 2277.0,1195.2 C2357.6,1201.2 2395.6,1245.1 2475.8,1248.4 C2554.6,1251.6 2595.0,1226.2 2674.5,1211.5" fill="none" stroke="#5cc46c" stroke-width="4.5" stroke-linejoin="round" stroke-linecap="round"/>
<path d="M687.0,1225.2 C766.5,1203.8 807.7,1166.6 885.8,1171.5 C966.7,1176.6 1005.9,1252.6 1084.5,1250.2 C1164.9,1247.8 1211.1,1207.3 1283.2,1159.6 C1370.1,1102.3 1395.2,1005.3 1482.0,987.8 C1554.2,973.1 1605.8,1034.9 1680.8,1079.2 C1764.8,1128.9 1792.2,1184.4 1879.5,1222.8 C1951.2,1254.0 1998.3,1247.7 2078.2,1254.0 C2157.3,1254.0 2197.5,1254.0 2277.0,1254.0 C2356.5,1254.0 2396.2,1254.0 2475.8,1254.0 C2555.2,1254.0 2595.0,1254.0 2674.5,1254.0" fill="none" stroke="#7adc8e" stroke-width="4.5" stroke-linejoin="round" stroke-linecap="round"/>
<path d="M687.0,1251.5 C766.5,1248.5 806.3,1243.5 885.8,1244.0 C965.3,1244.5 1005.0,1253.7 1084.5,1254.0 C1164.0,1254.0 1203.8,1245.2 1283.2,1245.2 C1362.8,1245.2 1402.5,1252.2 1482.0,1254.0 C1561.5,1254.0 1601.2,1254.0 1680.8,1254.0 C1760.2,1254.0 1800.1,1254.0 1879.5,1254.0 C1959.1,1251.0 1998.6,1242.3 2078.2,1239.0 C2157.6,1235.8 2197.6,1234.8 2277.0,1237.8 C2356.6,1240.8 2396.1,1251.0 2475.8,1254.0 C2555.1,1254.0 2595.0,1253.2 2674.5,1252.8" fill="none" stroke="#a259f0" stroke-width="4.5" stroke-linejoin="round" stroke-linecap="round"/>
<circle cx="687.0" cy="1022.8" r="4.5" fill="#5cc46c" stroke="#0b0b0d" stroke-width="2.5"/>
<circle cx="885.8" cy="984.0" r="4.5" fill="#5cc46c" stroke="#0b0b0d" stroke-width="2.5"/>
<circle cx="1084.5" cy="1250.2" r="4.5" fill="#5cc46c" stroke="#0b0b0d" stroke-width="2.5"/>
<circle cx="1283.2" cy="1204.0" r="4.5" fill="#5cc46c" stroke="#0b0b0d" stroke-width="2.5"/>
<circle cx="1482.0" cy="1214.0" r="4.5" fill="#5cc46c" stroke="#0b0b0d" stroke-width="2.5"/>
<circle cx="1680.8" cy="1147.8" r="4.5" fill="#5cc46c" stroke="#0b0b0d" stroke-width="2.5"/>
<circle cx="1879.5" cy="1084.6" r="4.5" fill="#5cc46c" stroke="#0b0b0d" stroke-width="2.5"/>
<circle cx="2078.2" cy="1219.0" r="4.5" fill="#5cc46c" stroke="#0b0b0d" stroke-width="2.5"/>
<circle cx="2277.0" cy="1195.2" r="4.5" fill="#5cc46c" stroke="#0b0b0d" stroke-width="2.5"/>
<circle cx="2475.8" cy="1248.4" r="4.5" fill="#5cc46c" stroke="#0b0b0d" stroke-width="2.5"/>
<circle cx="2674.5" cy="1211.5" r="4.5" fill="#5cc46c" stroke="#0b0b0d" stroke-width="2.5"/>
<circle cx="687.0" cy="1225.2" r="4.5" fill="#7adc8e" stroke="#0b0b0d" stroke-width="2.5"/>
<circle cx="885.8" cy="1171.5" r="4.5" fill="#7adc8e" stroke="#0b0b0d" stroke-width="2.5"/>
<circle cx="1084.5" cy="1250.2" r="4.5" fill="#7adc8e" stroke="#0b0b0d" stroke-width="2.5"/>
<circle cx="1283.2" cy="1159.6" r="4.5" fill="#7adc8e" stroke="#0b0b0d" stroke-width="2.5"/>
<circle cx="1482.0" cy="987.8" r="4.5" fill="#7adc8e" stroke="#0b0b0d" stroke-width="2.5"/>
<circle cx="1680.8" cy="1079.2" r="4.5" fill="#7adc8e" stroke="#0b0b0d" stroke-width="2.5"/>
<circle cx="1879.5" cy="1222.8" r="4.5" fill="#7adc8e" stroke="#0b0b0d" stroke-width="2.5"/>
<circle cx="2078.2" cy="1254.0" r="4.5" fill="#7adc8e" stroke="#0b0b0d" stroke-width="2.5"/>
<circle cx="2277.0" cy="1254.0" r="4.5" fill="#7adc8e" stroke="#0b0b0d" stroke-width="2.5"/>
<circle cx="2475.8" cy="1254.0" r="4.5" fill="#7adc8e" stroke="#0b0b0d" stroke-width="2.5"/>
<circle cx="2674.5" cy="1254.0" r="4.5" fill="#7adc8e" stroke="#0b0b0d" stroke-width="2.5"/>
<circle cx="687.0" cy="1251.5" r="4.5" fill="#a259f0" stroke="#0b0b0d" stroke-width="2.5"/>
<circle cx="885.8" cy="1244.0" r="4.5" fill="#a259f0" stroke="#0b0b0d" stroke-width="2.5"/>
<circle cx="1084.5" cy="1254.0" r="4.5" fill="#a259f0" stroke="#0b0b0d" stroke-width="2.5"/>
<circle cx="1283.2" cy="1245.2" r="4.5" fill="#a259f0" stroke="#0b0b0d" stroke-width="2.5"/>
<circle cx="1482.0" cy="1254.0" r="4.5" fill="#a259f0" stroke="#0b0b0d" stroke-width="2.5"/>
<circle cx="1680.8" cy="1254.0" r="4.5" fill="#a259f0" stroke="#0b0b0d" stroke-width="2.5"/>
<circle cx="1879.5" cy="1254.0" r="4.5" fill="#a259f0" stroke="#0b0b0d" stroke-width="2.5"/>
<circle cx="2078.2" cy="1239.0" r="4.5" fill="#a259f0" stroke="#0b0b0d" stroke-width="2.5"/>
<circle cx="2277.0" cy="1237.8" r="4.5" fill="#a259f0" stroke="#0b0b0d" stroke-width="2.5"/>
<circle cx="2475.8" cy="1254.0" r="4.5" fill="#a259f0" stroke="#0b0b0d" stroke-width="2.5"/>
<circle cx="2674.5" cy="1252.8" r="4.5" fill="#a259f0" stroke="#0b0b0d" stroke-width="2.5"/>
</svg>
<div class="t" style="top:1243.5px;font-size:20px;font-family:'Liberation Serif',serif;color:#a1a1aa;right:2215.0px;">0</div>
<div class="t" style="top:1181.0px;font-size:20px;font-family:'Liberation Serif',serif;color:#a1a1aa;right:2215.0px;">50</div>
<div class="t" style="top:1118.5px;font-size:20px;font-family:'Liberation Serif',serif;color:#a1a1aa;right:2215.0px;">100</div>
<div class="t" style="top:1056.0px;font-size:20px;font-family:'Liberation Serif',serif;color:#a1a1aa;right:2215.0px;">150</div>
<div class="t" style="top:993.5px;font-size:20px;font-family:'Liberation Serif',serif;color:#a1a1aa;right:2215.0px;">200</div>
<div class="t" style="top:931.0px;font-size:20px;font-family:'Liberation Serif',serif;color:#a1a1aa;right:2215.0px;">250</div>
<div class="t" style="top:1277.3px;font-size:22px;font-family:'Liberation Serif',serif;color:#a1a1aa;letter-spacing:0.3px;left:187.0px;width:1000px;text-align:center;">01/04 20:00</div>
<div class="t" style="top:1277.3px;font-size:22px;font-family:'Liberation Serif',serif;color:#a1a1aa;letter-spacing:0.3px;left:385.8px;width:1000px;text-align:center;">01/04 21:00</div>
<div class="t" style="top:1277.3px;font-size:22px;font-family:'Liberation Serif',serif;color:#a1a1aa;letter-spacing:0.3px;left:584.5px;width:1000px;text-align:center;">01/04 22:00</div>
<div class="t" style="top:1277.3px;font-size:22px;font-family:'Liberation Serif',serif;color:#a1a1aa;letter-spacing:0.3px;left:783.2px;width:1000px;text-align:center;">01/05 23:00</div>
<div class="t" style="top:1277.3px;font-size:22px;font-family:'Liberation Serif',serif;color:#a1a1aa;letter-spacing:0.3px;left:982.0px;width:1000px;text-align:center;">01/06 00:00</div>
<div class="t" style="top:1277.3px;font-size:22px;font-family:'Liberation Serif',serif;color:#a1a1aa;letter-spacing:0.3px;left:1180.8px;width:1000px;text-align:center;">01/06 01:00</div>
<div class="t" style="top:1277.3px;font-size:22px;font-family:'Liberation Serif',serif;color:#a1a1aa;letter-spacing:0.3px;left:1379.5px;width:1000px;text-align:center;">01/06 02:00</div>
<div class="t" style="top:1277.3px;font-size:22px;font-family:'Liberation Serif',serif;color:#a1a1aa;letter-spacing:0.3px;left:1578.2px;width:1000px;text-align:center;">01/06 03:00</div>
<div class="t" style="top:1277.3px;font-size:22px;font-family:'Liberation Serif',serif;color:#a1a1aa;letter-spacing:0.3px;left:1777.0px;width:1000px;text-align:center;">01/06 04:00</div>
<div class="t" style="top:1277.3px;font-size:22px;font-family:'Liberation Serif',serif;color:#a1a1aa;letter-spacing:0.3px;left:1975.8px;width:1000px;text-align:center;">01/08 17:00</div>
<div class="t" style="top:1277.3px;font-size:22px;font-family:'Liberation Serif',serif;color:#a1a1aa;letter-spacing:0.3px;left:2174.5px;width:1000px;text-align:center;">01/08 18:00</div>
<div class="abs" style="left:1949px;top:796px;width:288px;height:304px;border:2px solid #2a2a2e;border-radius:24px;background:#0e0e11;box-shadow:0 20px 50px rgba(0,0,0,0.5);overflow:hidden"><div class="abs" style="left:0;top:125px;width:284px;height:54px;background:#1c1c1f"></div></div>
<div class="t" style="top:827.6px;font-size:19px;font-family:'Liberation Mono',monospace;color:#a1a1aa;letter-spacing:-0.5px;-webkit-text-stroke:0.3px currentColor;left:1975.0px;">Last 1H</div>
<div class="t" style="top:884.5px;font-size:19px;font-family:'Liberation Mono',monospace;color:#a1a1aa;letter-spacing:-0.5px;-webkit-text-stroke:0.3px currentColor;left:1975.0px;">Last 6H</div>
<div class="t" style="top:941.4px;font-size:19px;font-family:'Liberation Mono',monospace;color:#a1a1aa;letter-spacing:-0.5px;-webkit-text-stroke:0.3px currentColor;left:1975.0px;">Last 24H</div>
<div class="t" style="top:998.3px;font-size:19px;font-family:'Liberation Mono',monospace;color:#a1a1aa;letter-spacing:-0.5px;-webkit-text-stroke:0.3px currentColor;left:1975.0px;">Last 7D</div>
<div class="t" style="top:1055.2px;font-size:19px;font-family:'Liberation Mono',monospace;color:#4fb3d9;letter-spacing:-0.5px;-webkit-text-stroke:0.3px currentColor;left:1975.0px;">All Time</div>

</body></html>
